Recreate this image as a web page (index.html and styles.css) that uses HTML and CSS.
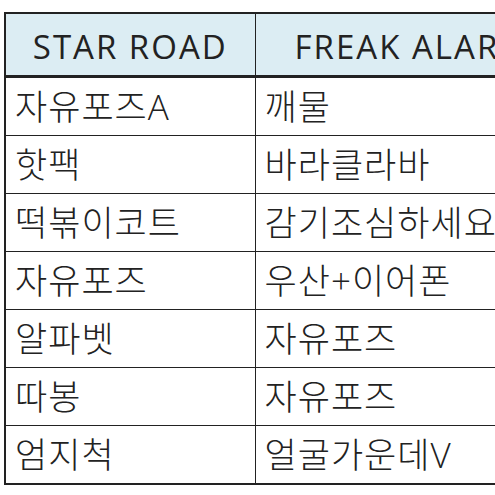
FILE: index.html
```html
<!DOCTYPE html>
<html lang="ko">
<head>
<meta charset="utf-8">
<link rel="stylesheet" href="styles.css">
</head>
<body>
<table class="sheet">
  <colgroup><col class="c1"><col class="c2"></colgroup>
  <thead>
    <tr><th>STAR ROAD</th><th>FREAK ALARM</th></tr>
  </thead>
  <tbody>
    <tr><td>자유포즈A</td><td>깨물</td></tr>
    <tr><td>핫팩</td><td>바라클라바</td></tr>
    <tr><td>떡볶이코트</td><td>감기조심하세요</td></tr>
    <tr><td>자유포즈</td><td>우산+이어폰</td></tr>
    <tr><td>알파벳</td><td>자유포즈</td></tr>
    <tr><td>따봉</td><td>자유포즈</td></tr>
    <tr><td>엄지척</td><td>얼굴가운데V</td></tr>
  </tbody>
</table>
</body>
</html>
```
FILE: styles.css
```css
html, body {
  margin: 0;
  padding: 0;
  background: #fff;
  overflow: hidden;
}
.sheet {
  margin: 12px 0 0 4px;
  border-collapse: collapse;
  table-layout: fixed;
  width: 565px;
  font-family: "Open Sans", "Noto Sans CJK KR", sans-serif;
  color: #222;
}
.c1 { width: 250px; }
.c2 { width: 315px; }
.sheet th {
  height: 58px;
  padding: 3px 0 0 0;
  background: #dcedf3;
  font-weight: 400;
  font-size: 33px;
  letter-spacing: 2px;
  text-align: center;
  border-top: 2px solid #222;
  border-bottom: 3px solid #222;
  border-left: 1px solid #222;
  white-space: nowrap;
  overflow: hidden;
  vertical-align: middle;
}
.sheet th:first-child,
.sheet td:first-child {
  border-left: 2px solid #222;
}
.sheet td {
  height: 57px;
  padding: 0 0 0 9px;
  font-size: 35px;
  font-weight: 300;
  letter-spacing: 1px;
  text-align: left;
  border-bottom: 1px solid #222;
  border-left: 1px solid #222;
  white-space: nowrap;
  overflow: hidden;
  vertical-align: middle;
  line-height: 1;
}
.sheet tbody tr:last-child td {
  border-bottom: 2px solid #222;
}
```
